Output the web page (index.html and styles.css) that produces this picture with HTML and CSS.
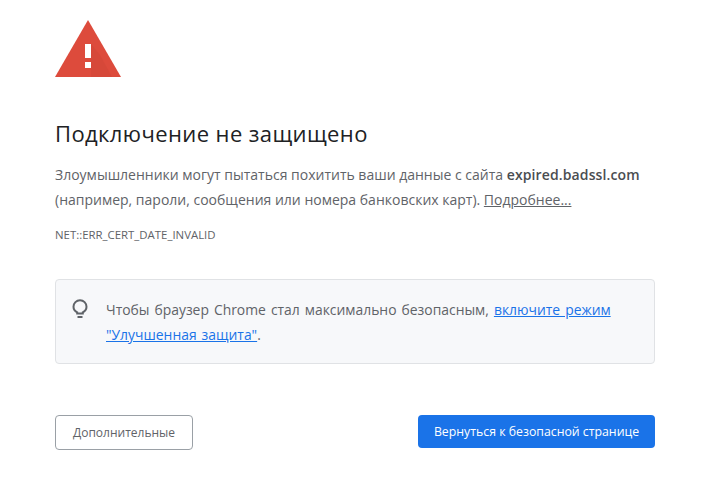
FILE: index.html
```html
<!DOCTYPE html>
<html lang="ru">
<head>
<meta charset="utf-8">
<title>Ошибка конфиденциальности</title>
<link rel="stylesheet" href="styles.css">
</head>
<body>
<main class="page">
  <svg class="warn" width="66" height="57" viewBox="0 0 66 57" aria-hidden="true">
    <path d="M33 0 L66 57 H0 Z" fill="#dd4b3c"/>
    <path d="M36 24 L45 35 L57 57 H36 Z" fill="#c73f33" opacity=".28"/>
    <rect x="30" y="24" width="6" height="14" fill="#fff"/>
    <rect x="30" y="42" width="6" height="6" fill="#fff"/>
  </svg>
  <h1 class="title">Подключение не защищено</h1>
  <p class="desc">Злоумышленники могут пытаться похитить ваши данные с сайта <b class="host">expired.badssl.com</b> (например, пароли, сообщения или номера банковских карт). <a class="more" href="#">Подробнее...</a></p>
  <p class="code">NET::ERR_CERT_DATE_INVALID</p>
  <section class="tip">
    <svg class="bulb" width="16" height="21" viewBox="0 0 16 21" fill="none" stroke="#5f6368" stroke-width="2" aria-hidden="true">
      <path d="M5.2 14.6v-1.2C3 12.2 1.5 10.2 1.5 7.7a6.5 6.5 0 0 1 13 0c0 2.5-1.5 4.5-3.7 5.7v1.2z"/>
      <path d="M5.5 18h5"/>
    </svg>
    <p class="tip-text">Чтобы браузер Chrome стал максимально безопасным, <a class="link" href="#">включите режим "Улучшенная защита"</a>.</p>
  </section>
  <div class="actions">
    <button class="btn btn-sec" type="button">Дополнительные</button>
    <button class="btn btn-pri" type="button">Вернуться к безопасной странице</button>
  </div>
</main>
</body>
</html>
```
FILE: styles.css
```css
html, body { margin: 0; padding: 0; background: #fff; }
body { font-family: "Open Sans", "Noto Sans", sans-serif; color: #5f6368; font-size: 14px; }
.page { width: 600px; padding: 20px 55px 0; display: flex; flex-direction: column; }
.warn { display: block; }
.title { margin: 42px 0 0; font-size: 22px; line-height: 28px; font-weight: 400; color: #202124; letter-spacing: .4px; }
.desc { margin: 15px 0 0; line-height: 25px; font-size: 14px; }
.host { font-weight: 600; color: #4a4d51; letter-spacing: .12px; }
.more { color: #5f6368; text-decoration: underline; }
.code { margin: 15px 0 0; font-size: 11.4px; line-height: 16px; }
.tip { box-sizing: border-box; height: 85px; margin-top: 36px; background: #f7f8fa; border: 1px solid #e0e2e5; border-radius: 4px; padding: 17px 24px 0 16px; display: flex; gap: 18px; }
.bulb { flex: none; margin-top: 2px; }
.tip-text { margin: 0; font-size: 13.9px; line-height: 25px; word-spacing: 1.4px; }
.link { color: #1a73e8; text-decoration: underline; }
.actions { margin-top: 51px; display: flex; justify-content: space-between; }
.btn { box-sizing: border-box; height: 35px; border-radius: 4px; font-family: inherit; font-size: 12px; padding: 0; }
.btn-sec { width: 138px; background: #fff; border: 1px solid #9aa0a6; color: #5f6368; }
.btn-pri { width: 237px; height: 33px; background: #1a73e8; border: none; color: #fff; font-size: 12.3px; }
```
